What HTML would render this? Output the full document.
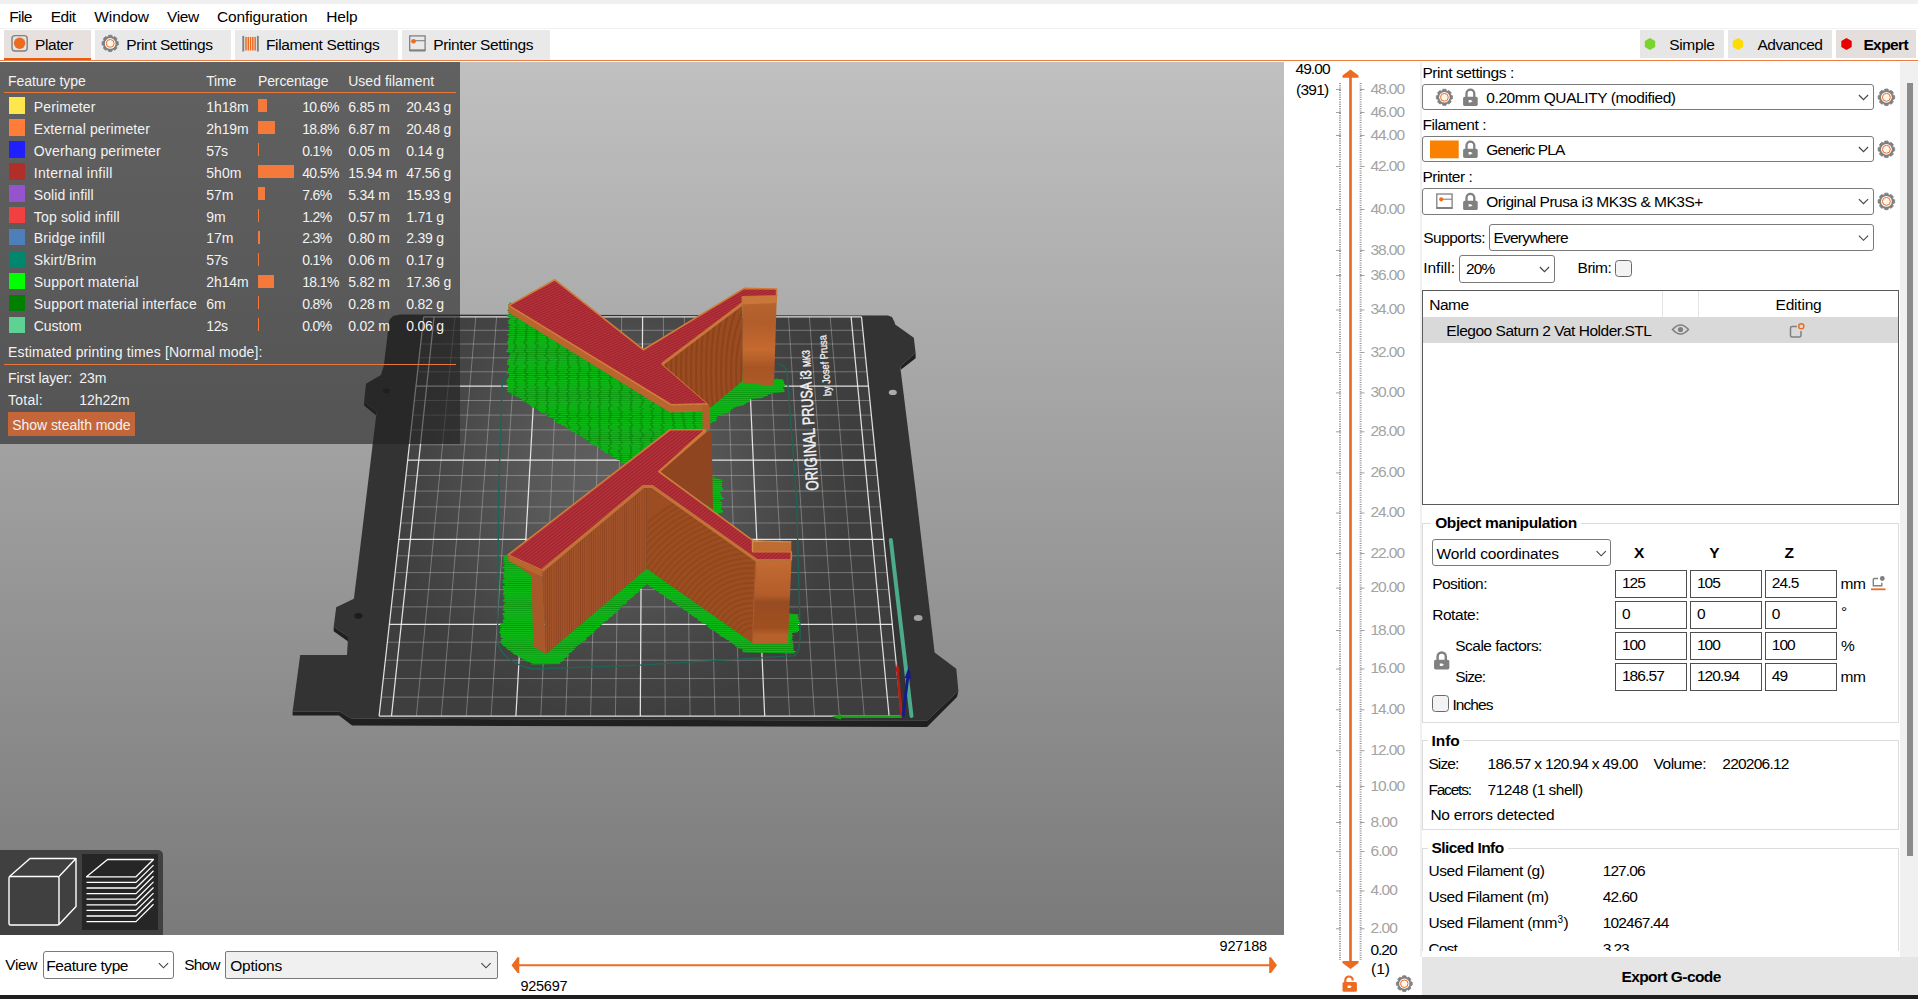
<!DOCTYPE html>
<html><head><meta charset="utf-8"><title>PrusaSlicer</title>
<style>
html,body{margin:0;padding:0;}
body{width:1918px;height:999px;position:relative;overflow:hidden;background:#fff;font-family:"Liberation Sans",sans-serif;}
.t{position:absolute;white-space:pre;}
.r{position:absolute;display:block;}
</style></head><body>
<svg class="r" style="left:0;top:62px" width="1284" height="873" viewBox="0 62 1284 873"><defs>
<linearGradient id="bg" x1="0" y1="0" x2="0" y2="1"><stop offset="0" stop-color="#c0c0c0"/><stop offset="1" stop-color="#7a7a7a"/></linearGradient>
<radialGradient id="glow" cx="615" cy="480" r="240" gradientUnits="userSpaceOnUse"><stop offset="0" stop-color="#616161"/><stop offset="0.35" stop-color="#585858"/><stop offset="0.76" stop-color="#464646"/><stop offset="1" stop-color="#3e3e3e"/></radialGradient>
<pattern id="pgreen" width="4" height="2.1" patternUnits="userSpaceOnUse"><rect width="4" height="2.1" fill="#0cbd15"/><rect y="1.3" width="4" height="0.8" fill="#079511"/></pattern>
<pattern id="pgreenv" width="10.5" height="2.1" patternUnits="userSpaceOnUse"><rect width="10.5" height="2.1" fill="#0cbd15"/><rect y="1.3" width="10.5" height="0.8" fill="#079511"/><rect x="0" width="2.2" height="2.1" fill="#05800c" opacity="0.6"/></pattern>
<pattern id="pred" width="2.3" height="6" patternUnits="userSpaceOnUse" patternTransform="rotate(66)"><rect width="2.3" height="6" fill="#b4323b"/><rect x="1.4" width="0.9" height="6" fill="#9c222b"/></pattern>
<pattern id="pred2" width="2.6" height="6" patternUnits="userSpaceOnUse" patternTransform="rotate(52)"><rect width="2.6" height="6" fill="#b4323b"/><rect x="1.6" width="1" height="6" fill="#9c222b"/></pattern>
<pattern id="pwallL" width="2.2" height="6" patternUnits="userSpaceOnUse"><rect width="2.2" height="6" fill="#a4542b"/><rect x="1.3" width="0.9" height="6" fill="#8f4520"/></pattern>
<linearGradient id="gend" x1="0" y1="0" x2="0" y2="1"><stop offset="0" stop-color="#c26c33"/><stop offset="0.42" stop-color="#b35c2a"/><stop offset="0.5" stop-color="#984c22"/><stop offset="0.82" stop-color="#a0501f"/><stop offset="0.9" stop-color="#b6602b"/><stop offset="1" stop-color="#b6602b"/></linearGradient>
<linearGradient id="gend2" x1="0" y1="0" x2="0" y2="1"><stop offset="0" stop-color="#b8662f"/><stop offset="0.3" stop-color="#b25d2a"/><stop offset="0.6" stop-color="#c56a30"/><stop offset="0.8" stop-color="#a85523"/><stop offset="1" stop-color="#b05a28"/></linearGradient>
<clipPath id="cwr"><polygon points="648,486.5 756.2,560 752.5,643 646.8,568.7"/></clipPath>
<clipPath id="cwu"><polygon points="662.2,364.1 742.4,303.8 742.4,381 710,408 708.2,404"/></clipPath>
<filter id="jag" x="-5%" y="-5%" width="110%" height="110%"><feTurbulence type="fractalNoise" baseFrequency="0.03 0.45" numOctaves="1" seed="7" result="n"/><feColorMatrix in="n" type="matrix" values="1 0 0 0 0  0 0 0 0 0.5  0 0 0 0 0  0 0 0 0 1" result="m"/><feDisplacementMap in="SourceGraphic" in2="m" scale="7" xChannelSelector="R" yChannelSelector="G"/></filter>
</defs>
<rect x="0" y="62" width="1284" height="873" fill="url(#bg)"/>
<polygon points="292.6,711.4 292.6,715.5 339.0,715.5 352.1,725.6 927.0,727.0 957.0,697.0 958.4,691.1 926.9,720.8 351.2,718.6 339.5,711.4" fill="#202020" />
<polygon points="333.7,626.7 333.7,631.2 348.1,641.6 348.1,636.6" fill="#202020" />
<polygon points="364.1,401.8 364.1,405.5 376.2,415.5 376.6,411.9" fill="#202020" />
<polygon points="915.6,352.8 915.6,358.2 900.8,369.8 900.2,366.5" fill="#202020" />
<polygon points="400.2,314.6 888.0,315.4 892.0,317.0 894.6,322.2 895.2,324.6 913.8,337.8 915.6,352.8 900.2,366.5 915.6,490.0 934.6,652.6 956.3,668.7 958.4,691.1 926.9,720.8 351.2,718.6 339.5,711.4 292.6,711.4 300.2,655.0 347.0,655.0 348.1,636.6 333.7,626.7 336.2,607.2 353.9,598.7 358.7,560.0 376.6,411.9 364.1,401.8 366.0,383.8 380.9,374.9 383.8,365.7 389.3,320.1 393.0,316.0" fill="#333333" />
<ellipse cx="892.8" cy="392.4" rx="4" ry="2.6" fill="#ababab"/>
<ellipse cx="918.2" cy="617.9" rx="4.4" ry="3" fill="#a2a2a2"/>
<ellipse cx="386.5" cy="391" rx="3.4" ry="2.4" fill="#1c1c1c"/>
<ellipse cx="358.4" cy="615.9" rx="4" ry="2.8" fill="#1c1c1c"/>
<polygon points="901.5,716.0 379.1,716.0 423.7,316.8 861.5,316.8" fill="url(#glow)" />
<g stroke="#d0d0d0" stroke-opacity="0.38" stroke-width="1"><line x1="899.6" y1="697.1" x2="381.2" y2="697.1"/><line x1="897.8" y1="678.5" x2="383.3" y2="678.5"/><line x1="895.9" y1="660.2" x2="385.3" y2="660.2"/><line x1="894.1" y1="642.2" x2="387.3" y2="642.2"/><line x1="890.6" y1="606.9" x2="391.3" y2="606.9"/><line x1="888.9" y1="589.6" x2="393.2" y2="589.6"/><line x1="887.2" y1="572.6" x2="395.1" y2="572.6"/><line x1="885.5" y1="555.8" x2="397.0" y2="555.8"/><line x1="882.2" y1="523.0" x2="400.7" y2="523.0"/><line x1="880.6" y1="506.9" x2="402.4" y2="506.9"/><line x1="879.0" y1="491.1" x2="404.2" y2="491.1"/><line x1="877.4" y1="475.5" x2="406.0" y2="475.5"/><line x1="874.3" y1="444.8" x2="409.4" y2="444.8"/><line x1="872.8" y1="429.9" x2="411.1" y2="429.9"/><line x1="871.3" y1="415.1" x2="412.7" y2="415.1"/><line x1="869.9" y1="400.5" x2="414.3" y2="400.5"/><line x1="867.0" y1="371.8" x2="417.5" y2="371.8"/><line x1="865.6" y1="357.8" x2="419.1" y2="357.8"/><line x1="864.2" y1="344.0" x2="420.6" y2="344.0"/><line x1="862.8" y1="330.3" x2="422.2" y2="330.3"/><line x1="864.2" y1="716.0" x2="830.2" y2="316.8"/><line x1="839.3" y1="716.0" x2="809.4" y2="316.8"/><line x1="814.5" y1="716.0" x2="788.5" y2="316.8"/><line x1="789.6" y1="716.0" x2="767.7" y2="316.8"/><line x1="739.8" y1="716.0" x2="726.0" y2="316.8"/><line x1="715.0" y1="716.0" x2="705.1" y2="316.8"/><line x1="690.1" y1="716.0" x2="684.3" y2="316.8"/><line x1="665.2" y1="716.0" x2="663.4" y2="316.8"/><line x1="615.4" y1="716.0" x2="621.7" y2="316.8"/><line x1="590.6" y1="716.0" x2="600.9" y2="316.8"/><line x1="565.7" y1="716.0" x2="580.0" y2="316.8"/><line x1="540.8" y1="716.0" x2="559.2" y2="316.8"/><line x1="491.1" y1="716.0" x2="517.5" y2="316.8"/><line x1="466.2" y1="716.0" x2="496.6" y2="316.8"/><line x1="441.3" y1="716.0" x2="475.8" y2="316.8"/><line x1="416.4" y1="716.0" x2="454.9" y2="316.8"/></g>
<g stroke="#f2f2f2" stroke-opacity="0.9" stroke-width="1.25"><line x1="901.5" y1="716.0" x2="379.1" y2="716.0"/><line x1="892.3" y1="624.4" x2="389.3" y2="624.4"/><line x1="883.8" y1="539.3" x2="398.8" y2="539.3"/><line x1="875.9" y1="460.0" x2="407.7" y2="460.0"/><line x1="868.4" y1="386.1" x2="415.9" y2="386.1"/><line x1="861.5" y1="316.8" x2="423.7" y2="316.8"/><line x1="889.1" y1="716.0" x2="851.1" y2="316.8"/><line x1="764.7" y1="716.0" x2="746.8" y2="316.8"/><line x1="640.3" y1="716.0" x2="642.6" y2="316.8"/><line x1="515.9" y1="716.0" x2="538.3" y2="316.8"/><line x1="391.5" y1="716.0" x2="434.1" y2="316.8"/><line x1="901.5" y1="716.0" x2="861.5" y2="316.8"/><line x1="379.1" y1="716.0" x2="423.7" y2="316.8"/></g>
<text transform="translate(818.4,490.3) rotate(-93.6) scale(0.752,1)" font-family="Liberation Sans, sans-serif" font-size="17.5" fill="#f2f2f2" stroke="#f2f2f2" stroke-width="0.45">ORIGINAL <tspan font-size="16.5">PRUSA </tspan><tspan font-size="15.5">i3 </tspan><tspan font-size="10.8">MK3</tspan></text>
<text transform="translate(831.2,395.8) rotate(-94.8) scale(0.84,1)" font-family="Liberation Sans, sans-serif" font-size="11" fill="#f2f2f2" stroke="#f2f2f2" stroke-width="0.3">by Josef Prusa</text>
<path d="M510.7 369.3 L502.3 380 L498.5 500 L497.5 643.8 Q505 663 532.3 669 L640 665.2 L793 655.8 Q800 655 800.2 634 L796.6 500 L787 372 Q786 366 779 364" fill="none" stroke="#1d6657" stroke-width="1.3"/>
<line x1="890.8" y1="540" x2="911.5" y2="716" stroke="#4cab8a" stroke-width="4" stroke-linecap="round"/>
<line x1="901.6" y1="716.6" x2="897.3" y2="668" stroke="#b02018" stroke-width="2.6"/><path d="M897.1 662 L895.3 672 L899.8 671.6 Z" fill="#b02018"/>
<line x1="903" y1="716.6" x2="908" y2="676" stroke="#141a90" stroke-width="2.8"/><path d="M908.6 667 L904.8 678 L911.4 678.6 Z" fill="#141a90"/>
<line x1="901.6" y1="716.8" x2="838" y2="716.8" stroke="#18a018" stroke-width="2.6"/><path d="M832 716.8 L841 714 L841 719.6 Z" fill="#18a018"/>
<g filter="url(#jag)">
<polygon points="508.5,302.0 671.0,402.0 708.0,402.0 708.0,434.0 672.0,434.0 629.0,467.0 508.0,391.5 506.5,383.0 508.0,379.0" fill="url(#pgreenv)" />
<polygon points="705.0,403.0 742.4,374.0 774.0,380.0 775.0,378.5 784.0,379.5 784.5,392.0 772.0,393.5 762.0,398.0 752.0,399.0 745.0,405.0 735.0,407.0 728.0,413.0 720.0,415.0 712.0,423.0 709.0,423.0" fill="url(#pgreen)" />
<polygon points="706.0,474.0 722.0,480.0 722.0,512.0 716.0,515.0 706.0,506.0" fill="url(#pgreen)" />
<polygon points="503.5,556.0 512.0,556.0 538.0,574.0 538.0,644.0 546.0,649.0 646.8,562.0 752.0,636.0 786.0,636.0 786.0,613.0 799.0,614.5 799.0,632.0 792.0,633.0 794.0,653.5 745.0,652.5 646.8,584.0 570.0,653.5 560.0,664.0 533.0,664.5 515.0,655.0 501.0,643.0 500.0,626.5 503.5,621.0" fill="url(#pgreen)" />
</g>
<polygon points="508.3,304.0 671.0,402.0 708.5,402.0 708.5,411.5 670.0,412.5 508.5,312.5" fill="#b8652f" />
<polygon points="702.5,405.5 710.2,405.5 710.2,429.5 702.5,429.5" fill="#b35f2b" />
<polygon points="508.9,305.6 554.9,279.8 643.3,349.7 744.2,288.4 776.6,289.0 776.6,296.0 742.4,296.8 742.4,303.8 662.2,364.1 708.2,403.8 671.2,404.7" fill="url(#pred)" stroke="#cf7c3a" stroke-width="1.6" stroke-linejoin="round"/>
<polygon points="662.2,364.1 742.4,303.8 742.4,381.0 710.0,408.0 708.2,404.0" fill="#9a4b20" />
<g clip-path="url(#cwu)" fill="none" stroke="#7f3a14" stroke-width="2" stroke-opacity="0.45"><ellipse cx="760" cy="372" rx="14" ry="36.4"/><ellipse cx="760" cy="372" rx="19" ry="49.4"/><ellipse cx="760" cy="372" rx="24" ry="62.4"/><ellipse cx="760" cy="372" rx="29" ry="75.4"/><ellipse cx="760" cy="372" rx="34" ry="88.4"/><ellipse cx="760" cy="372" rx="39" ry="101.4"/><ellipse cx="760" cy="372" rx="44" ry="114.4"/><ellipse cx="760" cy="372" rx="49" ry="127.4"/><ellipse cx="760" cy="372" rx="54" ry="140.4"/><ellipse cx="760" cy="372" rx="59" ry="153.4"/><ellipse cx="760" cy="372" rx="64" ry="166.4"/><ellipse cx="760" cy="372" rx="69" ry="179.4"/><ellipse cx="760" cy="372" rx="74" ry="192.4"/><ellipse cx="760" cy="372" rx="79" ry="205.4"/><ellipse cx="760" cy="372" rx="84" ry="218.4"/><ellipse cx="760" cy="372" rx="89" ry="231.4"/><ellipse cx="760" cy="372" rx="94" ry="244.4"/><ellipse cx="760" cy="372" rx="99" ry="257.4"/></g>
<polyline points="662.2,364.1 742.4,303.8" fill="none" stroke="#c8763a" stroke-width="3"/>
<polygon points="742.4,296.5 776.8,295.6 774.0,386.0 742.4,382.5" fill="url(#gend2)" />
<polygon points="742.4,296.5 776.8,295.6 776.8,303.0 742.4,304.5" fill="#c9773a" />
<polygon points="658.8,471.5 706.3,430.6 711.7,432.0 713.0,509.5" fill="#8f451f" />
<polyline points="658.8,471.5 706.3,430.6" fill="none" stroke="#c8763a" stroke-width="2.6"/>
<polygon points="508.0,555.1 670.2,429.7 705.4,429.7 658.8,471.5 752.6,540.3 752.6,551.8 791.3,551.8 791.3,560.0 756.2,560.0 652.2,486.5 643.2,486.5 542.3,570.4" fill="url(#pred2)" stroke="#cf7c3a" stroke-width="1.6" stroke-linejoin="round"/>
<polygon points="752.6,541.0 791.3,541.8 791.3,551.8 752.6,551.8" fill="#bf6c33" />
<polyline points="752.6,551.8 752.6,541 791.3,541.8" fill="none" stroke="#d58a45" stroke-width="1.3"/>
<polygon points="542.3,570.4 643.2,486.5 647.0,486.5 646.8,568.7 545.9,654.3" fill="url(#pwallL)" />
<polygon points="508.0,555.1 542.3,570.4 545.9,654.3 533.3,646.2 531.5,576.0 510.0,560.0" fill="#a8582a" />
<polygon points="508.0,555.1 542.3,570.4 542.6,577.0 508.5,561.0" fill="#b8652f" />
<polygon points="647.0,486.5 652.2,486.5 756.2,560.0 752.5,643.0 646.8,568.7" fill="#9c4d22" />
<g clip-path="url(#cwr)" fill="none" stroke="#85400f" stroke-width="2.2" stroke-opacity="0.4"><circle cx="752" cy="640" r="12"/><circle cx="752" cy="640" r="17"/><circle cx="752" cy="640" r="22"/><circle cx="752" cy="640" r="27"/><circle cx="752" cy="640" r="32"/><circle cx="752" cy="640" r="37"/><circle cx="752" cy="640" r="42"/><circle cx="752" cy="640" r="47"/><circle cx="752" cy="640" r="52"/><circle cx="752" cy="640" r="57"/><circle cx="752" cy="640" r="62"/><circle cx="752" cy="640" r="67"/><circle cx="752" cy="640" r="72"/><circle cx="752" cy="640" r="77"/><circle cx="752" cy="640" r="82"/><circle cx="752" cy="640" r="87"/><circle cx="752" cy="640" r="92"/><circle cx="752" cy="640" r="97"/><circle cx="752" cy="640" r="102"/><circle cx="752" cy="640" r="107"/><circle cx="752" cy="640" r="112"/><circle cx="752" cy="640" r="117"/><circle cx="752" cy="640" r="122"/><circle cx="752" cy="640" r="127"/><circle cx="752" cy="640" r="132"/><circle cx="752" cy="640" r="137"/><circle cx="752" cy="640" r="142"/><circle cx="752" cy="640" r="147"/><circle cx="752" cy="640" r="152"/><circle cx="752" cy="640" r="157"/></g>
<polyline points="542.3,570.4 643.2,486.5 652.2,486.5 756.2,560" fill="none" stroke="#c27238" stroke-width="3.2" stroke-linejoin="round"/>
<polygon points="756.0,560.5 791.5,560.5 788.0,643.2 752.5,643.2" fill="url(#gend)" />
<line x1="755.4" y1="561" x2="752.6" y2="643" stroke="#aa5a2a" stroke-width="1.2"/></svg>
<div class="r" style="left:0px;top:62px;width:460px;height:382px;background:rgba(33,33,33,0.6);"></div>
<span class="t" style="left:8.10px;top:73.65px;font-size:14px;line-height:14px;color:#f2f2f2;letter-spacing:-0.092px;">Feature type</span>
<span class="t" style="left:206.30px;top:73.65px;font-size:14px;line-height:14px;color:#f2f2f2;letter-spacing:-0.223px;">Time</span>
<span class="t" style="left:258.00px;top:73.65px;font-size:14px;line-height:14px;color:#f2f2f2;letter-spacing:-0.131px;">Percentage</span>
<span class="t" style="left:348.20px;top:73.65px;font-size:14px;line-height:14px;color:#f2f2f2;letter-spacing:0.031px;">Used filament</span>
<div class="r" style="left:4px;top:91.8px;width:452px;height:1.2px;background:#e8773a;"></div>
<div class="r" style="left:8.8px;top:97.4px;width:16.4px;height:16.4px;background:#ffe64d;"></div>
<span class="t" style="left:33.80px;top:99.85px;font-size:14px;line-height:14px;color:#f2f2f2;letter-spacing:0.113px;">Perimeter</span>
<span class="t" style="left:206.30px;top:99.85px;font-size:14px;line-height:14px;color:#f2f2f2;letter-spacing:-0.102px;">1h18m</span>
<div class="r" style="left:258px;top:99.1px;width:9.434px;height:13px;background:#f5793a;"></div>
<span class="t" style="left:302.20px;top:99.85px;font-size:14px;line-height:14px;color:#f2f2f2;letter-spacing:-0.639px;">10.6%</span>
<span class="t" style="left:348.20px;top:99.85px;font-size:14px;line-height:14px;color:#f2f2f2;letter-spacing:-0.233px;">6.85 m</span>
<span class="t" style="left:406.30px;top:99.85px;font-size:14px;line-height:14px;color:#f2f2f2;letter-spacing:-0.302px;">20.43 g</span>
<div class="r" style="left:8.8px;top:119.33px;width:16.4px;height:16.4px;background:#ff7d38;"></div>
<span class="t" style="left:33.80px;top:121.78px;font-size:14px;line-height:14px;color:#f2f2f2;letter-spacing:0.101px;">External perimeter</span>
<span class="t" style="left:206.30px;top:121.78px;font-size:14px;line-height:14px;color:#f2f2f2;letter-spacing:-0.102px;">2h19m</span>
<div class="r" style="left:258px;top:121.03px;width:16.732px;height:13px;background:#f5793a;"></div>
<span class="t" style="left:302.20px;top:121.78px;font-size:14px;line-height:14px;color:#f2f2f2;letter-spacing:-0.639px;">18.8%</span>
<span class="t" style="left:348.20px;top:121.78px;font-size:14px;line-height:14px;color:#f2f2f2;letter-spacing:-0.233px;">6.87 m</span>
<span class="t" style="left:406.30px;top:121.78px;font-size:14px;line-height:14px;color:#f2f2f2;letter-spacing:-0.302px;">20.48 g</span>
<div class="r" style="left:8.8px;top:141.26px;width:16.4px;height:16.4px;background:#1f1fff;"></div>
<span class="t" style="left:33.80px;top:143.71px;font-size:14px;line-height:14px;color:#f2f2f2;letter-spacing:0.138px;">Overhang perimeter</span>
<span class="t" style="left:206.30px;top:143.71px;font-size:14px;line-height:14px;color:#f2f2f2;letter-spacing:-0.458px;">57s</span>
<div class="r" style="left:258px;top:142.96px;width:1.2px;height:13px;background:#f5793a;"></div>
<span class="t" style="left:302.20px;top:143.71px;font-size:14px;line-height:14px;color:#f2f2f2;letter-spacing:-0.653px;">0.1%</span>
<span class="t" style="left:348.20px;top:143.71px;font-size:14px;line-height:14px;color:#f2f2f2;letter-spacing:-0.233px;">0.05 m</span>
<span class="t" style="left:406.30px;top:143.71px;font-size:14px;line-height:14px;color:#f2f2f2;letter-spacing:-0.254px;">0.14 g</span>
<div class="r" style="left:8.8px;top:163.19px;width:16.4px;height:16.4px;background:#b03029;"></div>
<span class="t" style="left:33.80px;top:165.64px;font-size:14px;line-height:14px;color:#f2f2f2;letter-spacing:0.273px;">Internal infill</span>
<span class="t" style="left:206.30px;top:165.64px;font-size:14px;line-height:14px;color:#f2f2f2;letter-spacing:0.020px;">5h0m</span>
<div class="r" style="left:258px;top:164.89px;width:36.045px;height:13px;background:#f5793a;"></div>
<span class="t" style="left:302.20px;top:165.64px;font-size:14px;line-height:14px;color:#f2f2f2;letter-spacing:-0.639px;">40.5%</span>
<span class="t" style="left:348.20px;top:165.64px;font-size:14px;line-height:14px;color:#f2f2f2;letter-spacing:-0.212px;">15.94 m</span>
<span class="t" style="left:406.30px;top:165.64px;font-size:14px;line-height:14px;color:#f2f2f2;letter-spacing:-0.302px;">47.56 g</span>
<div class="r" style="left:8.8px;top:185.12px;width:16.4px;height:16.4px;background:#9654cc;"></div>
<span class="t" style="left:33.80px;top:187.57px;font-size:14px;line-height:14px;color:#f2f2f2;letter-spacing:0.063px;">Solid infill</span>
<span class="t" style="left:206.30px;top:187.57px;font-size:14px;line-height:14px;color:#f2f2f2;letter-spacing:-0.078px;">57m</span>
<div class="r" style="left:258px;top:186.82px;width:6.764px;height:13px;background:#f5793a;"></div>
<span class="t" style="left:302.20px;top:187.57px;font-size:14px;line-height:14px;color:#f2f2f2;letter-spacing:-0.653px;">7.6%</span>
<span class="t" style="left:348.20px;top:187.57px;font-size:14px;line-height:14px;color:#f2f2f2;letter-spacing:-0.233px;">5.34 m</span>
<span class="t" style="left:406.30px;top:187.57px;font-size:14px;line-height:14px;color:#f2f2f2;letter-spacing:-0.302px;">15.93 g</span>
<div class="r" style="left:8.8px;top:207.05px;width:16.4px;height:16.4px;background:#f04040;"></div>
<span class="t" style="left:33.80px;top:209.50px;font-size:14px;line-height:14px;color:#f2f2f2;letter-spacing:0.171px;">Top solid infill</span>
<span class="t" style="left:206.30px;top:209.50px;font-size:14px;line-height:14px;color:#f2f2f2;letter-spacing:-0.025px;">9m</span>
<div class="r" style="left:258px;top:208.75px;width:1.2px;height:13px;background:#f5793a;"></div>
<span class="t" style="left:302.20px;top:209.50px;font-size:14px;line-height:14px;color:#f2f2f2;letter-spacing:-0.653px;">1.2%</span>
<span class="t" style="left:348.20px;top:209.50px;font-size:14px;line-height:14px;color:#f2f2f2;letter-spacing:-0.233px;">0.57 m</span>
<span class="t" style="left:406.30px;top:209.50px;font-size:14px;line-height:14px;color:#f2f2f2;letter-spacing:-0.254px;">1.71 g</span>
<div class="r" style="left:8.8px;top:228.98px;width:16.4px;height:16.4px;background:#4d80ba;"></div>
<span class="t" style="left:33.80px;top:231.43px;font-size:14px;line-height:14px;color:#f2f2f2;letter-spacing:0.209px;">Bridge infill</span>
<span class="t" style="left:206.30px;top:231.43px;font-size:14px;line-height:14px;color:#f2f2f2;letter-spacing:-0.078px;">17m</span>
<div class="r" style="left:258px;top:230.68px;width:2.047px;height:13px;background:#f5793a;"></div>
<span class="t" style="left:302.20px;top:231.43px;font-size:14px;line-height:14px;color:#f2f2f2;letter-spacing:-0.653px;">2.3%</span>
<span class="t" style="left:348.20px;top:231.43px;font-size:14px;line-height:14px;color:#f2f2f2;letter-spacing:-0.233px;">0.80 m</span>
<span class="t" style="left:406.30px;top:231.43px;font-size:14px;line-height:14px;color:#f2f2f2;letter-spacing:-0.254px;">2.39 g</span>
<div class="r" style="left:8.8px;top:250.91px;width:16.4px;height:16.4px;background:#00876e;"></div>
<span class="t" style="left:33.80px;top:253.36px;font-size:14px;line-height:14px;color:#f2f2f2;letter-spacing:0.194px;">Skirt/Brim</span>
<span class="t" style="left:206.30px;top:253.36px;font-size:14px;line-height:14px;color:#f2f2f2;letter-spacing:-0.458px;">57s</span>
<div class="r" style="left:258px;top:252.61px;width:1.2px;height:13px;background:#f5793a;"></div>
<span class="t" style="left:302.20px;top:253.36px;font-size:14px;line-height:14px;color:#f2f2f2;letter-spacing:-0.653px;">0.1%</span>
<span class="t" style="left:348.20px;top:253.36px;font-size:14px;line-height:14px;color:#f2f2f2;letter-spacing:-0.233px;">0.06 m</span>
<span class="t" style="left:406.30px;top:253.36px;font-size:14px;line-height:14px;color:#f2f2f2;letter-spacing:-0.254px;">0.17 g</span>
<div class="r" style="left:8.8px;top:272.84px;width:16.4px;height:16.4px;background:#00ff00;"></div>
<span class="t" style="left:33.80px;top:275.29px;font-size:14px;line-height:14px;color:#f2f2f2;letter-spacing:0.136px;">Support material</span>
<span class="t" style="left:206.30px;top:275.29px;font-size:14px;line-height:14px;color:#f2f2f2;letter-spacing:-0.102px;">2h14m</span>
<div class="r" style="left:258px;top:274.54px;width:16.109px;height:13px;background:#f5793a;"></div>
<span class="t" style="left:302.20px;top:275.29px;font-size:14px;line-height:14px;color:#f2f2f2;letter-spacing:-0.639px;">18.1%</span>
<span class="t" style="left:348.20px;top:275.29px;font-size:14px;line-height:14px;color:#f2f2f2;letter-spacing:-0.233px;">5.82 m</span>
<span class="t" style="left:406.30px;top:275.29px;font-size:14px;line-height:14px;color:#f2f2f2;letter-spacing:-0.302px;">17.36 g</span>
<div class="r" style="left:8.8px;top:294.77px;width:16.4px;height:16.4px;background:#008000;"></div>
<span class="t" style="left:33.80px;top:297.22px;font-size:14px;line-height:14px;color:#f2f2f2;letter-spacing:0.104px;">Support material interface</span>
<span class="t" style="left:206.30px;top:297.22px;font-size:14px;line-height:14px;color:#f2f2f2;letter-spacing:-0.025px;">6m</span>
<div class="r" style="left:258px;top:296.47px;width:1.2px;height:13px;background:#f5793a;"></div>
<span class="t" style="left:302.20px;top:297.22px;font-size:14px;line-height:14px;color:#f2f2f2;letter-spacing:-0.653px;">0.8%</span>
<span class="t" style="left:348.20px;top:297.22px;font-size:14px;line-height:14px;color:#f2f2f2;letter-spacing:-0.233px;">0.28 m</span>
<span class="t" style="left:406.30px;top:297.22px;font-size:14px;line-height:14px;color:#f2f2f2;letter-spacing:-0.254px;">0.82 g</span>
<div class="r" style="left:8.8px;top:316.7px;width:16.4px;height:16.4px;background:#5ed194;"></div>
<span class="t" style="left:33.80px;top:319.15px;font-size:14px;line-height:14px;color:#f2f2f2;letter-spacing:-0.089px;">Custom</span>
<span class="t" style="left:206.30px;top:319.15px;font-size:14px;line-height:14px;color:#f2f2f2;letter-spacing:-0.458px;">12s</span>
<div class="r" style="left:258px;top:318.4px;width:1.2px;height:13px;background:#f5793a;"></div>
<span class="t" style="left:302.20px;top:319.15px;font-size:14px;line-height:14px;color:#f2f2f2;letter-spacing:-0.653px;">0.0%</span>
<span class="t" style="left:348.20px;top:319.15px;font-size:14px;line-height:14px;color:#f2f2f2;letter-spacing:-0.233px;">0.02 m</span>
<span class="t" style="left:406.30px;top:319.15px;font-size:14px;line-height:14px;color:#f2f2f2;letter-spacing:-0.254px;">0.06 g</span>
<span class="t" style="left:8.10px;top:344.95px;font-size:14px;line-height:14px;color:#f2f2f2;letter-spacing:0.141px;">Estimated printing times [Normal mode]:</span>
<div class="r" style="left:4px;top:363.5px;width:452px;height:1.2px;background:#e8773a;"></div>
<span class="t" style="left:8.10px;top:371.05px;font-size:14px;line-height:14px;color:#f2f2f2;letter-spacing:-0.120px;">First layer:</span>
<span class="t" style="left:79.30px;top:371.05px;font-size:14px;line-height:14px;color:#f2f2f2;letter-spacing:-0.078px;">23m</span>
<span class="t" style="left:8.10px;top:393.05px;font-size:14px;line-height:14px;color:#f2f2f2;letter-spacing:0.206px;">Total:</span>
<span class="t" style="left:79.30px;top:393.05px;font-size:14px;line-height:14px;color:#f2f2f2;letter-spacing:-0.032px;">12h22m</span>
<div class="r" style="left:7.7px;top:412.2px;width:127.4px;height:23.8px;background:#c5663a;"></div>
<span class="t" style="left:12.20px;top:417.75px;font-size:14px;line-height:14px;color:#f2f2f2;letter-spacing:-0.039px;">Show stealth mode</span>
<div class="r" style="left:0px;top:849.5px;width:163px;height:85.5px;background:#404040;border-top-right-radius:5px;"></div>
<div class="r" style="left:82.4px;top:854px;width:75.4px;height:75.5px;background:#262626;"></div>
<svg class="r" style="left:0px;top:849px" width="165" height="86" viewBox="0 849 165 86"><g fill="none" stroke="#fff" stroke-width="1.4" stroke-linejoin="round"><rect x="9" y="876.5" width="50" height="48.5" rx="1.5"/><path d="M9.5 876.5 L30 858.5 H76 L59 876.5 M76 858.5 V906.5 L59 924.5"/></g><g fill="none" stroke="#fff" stroke-width="1.3" stroke-linejoin="round"><path d="M86.5 876.8 L107.5 859.5 H153.5 L136 876.8 Z"/><path d="M86.5 882.4 H136 L153.5 865.1"/><path d="M86.5 888.0 H136 L153.5 870.7"/><path d="M86.5 893.6 H136 L153.5 876.3"/><path d="M86.5 899.2 H136 L153.5 881.9"/><path d="M86.5 904.8 H136 L153.5 887.5"/><path d="M86.5 910.4 H136 L153.5 893.1"/><path d="M86.5 916.0 H136 L153.5 898.7"/><path d="M86.5 921.6 H136 L153.5 904.3"/></g></svg>
<div class="r" style="left:0px;top:0px;width:1918px;height:4px;background:#f0f0f0;"></div>
<div class="r" style="left:0px;top:4px;width:1918px;height:24px;background:#fff;"></div>
<div class="r" style="left:0px;top:28px;width:1918px;height:33px;background:#fff;"></div>
<div class="r" style="left:0px;top:28px;width:1918px;height:1.2px;background:#f2f2f2;"></div>
<span class="t" style="left:9.30px;top:8.88px;font-size:15.5px;line-height:15.5px;color:#000;letter-spacing:-0.644px;">File</span>
<span class="t" style="left:50.70px;top:8.88px;font-size:15.5px;line-height:15.5px;color:#000;letter-spacing:-0.427px;">Edit</span>
<span class="t" style="left:94.30px;top:8.88px;font-size:15.5px;line-height:15.5px;color:#000;letter-spacing:-0.072px;">Window</span>
<span class="t" style="left:167.00px;top:8.88px;font-size:15.5px;line-height:15.5px;color:#000;letter-spacing:-0.404px;">View</span>
<span class="t" style="left:217.00px;top:8.88px;font-size:15.5px;line-height:15.5px;color:#000;letter-spacing:-0.131px;">Configuration</span>
<span class="t" style="left:326.30px;top:8.88px;font-size:15.5px;line-height:15.5px;color:#000;letter-spacing:-0.170px;">Help</span>
<div class="r" style="left:4px;top:30px;width:87px;height:30px;background:#e9e9e9;"></div>
<div class="r" style="left:95px;top:30px;width:135.5px;height:30px;background:#e9e9e9;"></div>
<div class="r" style="left:235px;top:30px;width:162.5px;height:30px;background:#e9e9e9;"></div>
<div class="r" style="left:402px;top:30px;width:148px;height:30px;background:#e9e9e9;"></div>
<div class="r" style="left:4px;top:30px;width:87px;height:30px;background:#e6e1df;"></div>
<div class="r" style="left:4px;top:57.5px;width:87px;height:3.7px;background:#ea5b0c;"></div>
<div class="r" style="left:0px;top:60px;width:1918px;height:1.1px;background:#ec7e45;"></div>
<span class="t" style="left:35.00px;top:36.88px;font-size:15.5px;line-height:15.5px;color:#000;letter-spacing:-0.415px;">Plater</span>
<span class="t" style="left:126.30px;top:36.88px;font-size:15.5px;line-height:15.5px;color:#000;letter-spacing:-0.428px;">Print Settings</span>
<span class="t" style="left:266.00px;top:36.88px;font-size:15.5px;line-height:15.5px;color:#000;letter-spacing:-0.368px;">Filament Settings</span>
<span class="t" style="left:433.30px;top:36.88px;font-size:15.5px;line-height:15.5px;color:#000;letter-spacing:-0.392px;">Printer Settings</span>
<svg class="r" style="left:0px;top:28px" width="560" height="34" viewBox="0 28 560 34"><rect x="12" y="35.6" width="15.2" height="15.4" rx="3" fill="none" stroke="#808080" stroke-width="1.4"/><circle cx="19.6" cy="43.3" r="5.7" fill="#ed6b21"/><polygon points="108.14,36.74 108.63,35.25 111.77,35.25 112.26,36.74 113.45,37.23 114.85,36.53 117.07,38.75 116.37,40.15 116.86,41.34 118.35,41.83 118.35,44.97 116.86,45.46 116.37,46.65 117.07,48.05 114.85,50.27 113.45,49.57 112.26,50.06 111.77,51.55 108.63,51.55 108.14,50.06 106.95,49.57 105.55,50.27 103.33,48.05 104.03,46.65 103.54,45.46 102.05,44.97 102.05,41.83 103.54,41.34 104.03,40.15 103.33,38.75 105.55,36.53 106.95,37.23" fill="#808080" stroke="#808080" stroke-width="0.8" stroke-linejoin="round"/><circle cx="110.2" cy="43.4" r="5.312" fill="#fff"/><circle cx="110.2" cy="43.4" r="3.901" fill="#fff6ee" stroke="#ed6b21" stroke-width="1"/><rect x="242.3" y="35.9" width="1.9" height="15.6" fill="#808080"/><rect x="245.2" y="36.9" width="1.5" height="13.6" fill="#ed6b21"/><rect x="247.5" y="36.9" width="1.5" height="13.6" fill="#ed6b21"/><rect x="249.8" y="36.9" width="1.5" height="13.6" fill="#ed6b21"/><rect x="252.1" y="36.9" width="1.5" height="13.6" fill="#ed6b21"/><rect x="254.4" y="36.9" width="1.5" height="13.6" fill="#ed6b21"/><rect x="256.9" y="35.9" width="1.9" height="15.6" fill="#808080"/><rect x="409.7" y="35.9" width="15.4" height="14.6" fill="none" stroke="#808080" stroke-width="1.3"/><line x1="409.7" y1="50.4" x2="425.1" y2="50.4" stroke="#808080" stroke-width="2"/><line x1="413" y1="40.7" x2="425" y2="40.7" stroke="#808080" stroke-width="1.1"/><circle cx="413.5" cy="41.2" r="2.3" fill="#ed6b21"/></svg>
<div class="r" style="left:1640px;top:30px;width:84px;height:28px;background:#e6e6e6;"></div>
<div class="r" style="left:1728px;top:30px;width:104px;height:28px;background:#e6e6e6;"></div>
<div class="r" style="left:1836px;top:30px;width:80px;height:28px;background:#e6e6e6;"></div>
<div class="r" style="left:1836px;top:30px;width:80px;height:28px;background:#e4dfdd;"></div>
<svg class="r" style="left:1640px;top:30px" width="280" height="28" viewBox="1640 30 280 28"><polygon points="1655.20,47.00 1650.00,50.00 1644.80,47.00 1644.80,41.00 1650.00,38.00 1655.20,41.00" fill="#7bd32e"/><polygon points="1743.20,47.00 1738.00,50.00 1732.80,47.00 1732.80,41.00 1738.00,38.00 1743.20,41.00" fill="#ffdc00"/><polygon points="1851.70,47.00 1846.50,50.00 1841.30,47.00 1841.30,41.00 1846.50,38.00 1851.70,41.00" fill="#e70000"/></svg>
<span class="t" style="left:1669.20px;top:36.88px;font-size:15.5px;line-height:15.5px;color:#000;letter-spacing:-0.330px;">Simple</span>
<span class="t" style="left:1757.40px;top:36.88px;font-size:15.5px;line-height:15.5px;color:#000;letter-spacing:-0.480px;">Advanced</span>
<span class="t" style="left:1863.40px;top:36.88px;font-size:15.5px;line-height:15.5px;color:#000;letter-spacing:-0.607px;font-weight:bold;">Expert</span>
<div class="r" style="left:0px;top:935px;width:1421px;height:60px;background:#fff;"></div>
<div class="r" style="left:0px;top:994.5px;width:1918px;height:5px;background:#1e1e1e;"></div>
<span class="t" style="left:5.30px;top:957.38px;font-size:15.5px;line-height:15.5px;color:#000;letter-spacing:-0.404px;">View</span>
<div class="r" style="left:42.5px;top:951px;width:131px;height:27.5px;background:#fff;border:1px solid #7a7a7a;box-sizing:border-box;border-radius:3px;"></div>
<span class="t" style="left:46.30px;top:957.88px;font-size:15.5px;line-height:15.5px;color:#000;letter-spacing:-0.444px;">Feature type</span>
<span class="t" style="left:184.20px;top:957.38px;font-size:15.5px;line-height:15.5px;color:#000;letter-spacing:-0.844px;">Show</span>
<div class="r" style="left:225px;top:951px;width:273px;height:27.5px;background:#f0f0f0;border:1px solid #7a7a7a;box-sizing:border-box;border-radius:2px;"></div>
<span class="t" style="left:230.20px;top:957.88px;font-size:15.5px;line-height:15.5px;color:#000;letter-spacing:-0.231px;">Options</span>
<svg class="r" style="left:150px;top:955px" width="350" height="20" viewBox="150 955 350 20"><path d="M158.90 963.20 l4.60 4.60 l4.60 -4.60" fill="none" stroke="#444" stroke-width="1.15"/><path d="M481.40 963.20 l4.60 4.60 l4.60 -4.60" fill="none" stroke="#444" stroke-width="1.15"/></svg>
<svg class="r" style="left:505px;top:950px" width="780" height="30" viewBox="505 950 780 30"><line x1="516" y1="965.2" x2="1270" y2="965.2" stroke="#ed6b21" stroke-width="2"/><path d="M511.5 965.2 L517.5 957.3 H519.3 V973.1 H517.5 Z" fill="#ed6b21"/><path d="M1277 965.2 L1271 957.3 H1269.2 V973.1 H1271 Z" fill="#ed6b21"/></svg>
<span class="t" style="left:520.50px;top:978.53px;font-size:14.5px;line-height:14.5px;color:#000;letter-spacing:-0.281px;">925697</span>
<span class="t" style="left:1219.50px;top:938.53px;font-size:14.5px;line-height:14.5px;color:#000;letter-spacing:-0.148px;">927188</span>
<div class="r" style="left:1284px;top:62px;width:137px;height:873px;background:#fff;"></div>
<svg class="r" style="left:1284px;top:62px" width="137" height="933" viewBox="1284 62 137 933"><line x1="1350.5" y1="76" x2="1350.5" y2="962" stroke="#ed6b21" stroke-width="2.7"/><path d="M1350.5 69.5 L1358.5 75.5 V77.8 H1342.5 V75.5 Z" fill="#ed6b21"/><path d="M1350.5 969 L1358.5 963 V961 H1342.5 V963 Z" fill="#ed6b21"/><line x1="1340" y1="83" x2="1340" y2="960" stroke="#959595" stroke-width="2" stroke-dasharray="1 1.3"/><line x1="1360.6" y1="83" x2="1360.6" y2="960" stroke="#959595" stroke-width="2" stroke-dasharray="1 1.3"/><line x1="1336" y1="89.5" x2="1341" y2="89.5" stroke="#a0a0a0" stroke-width="1"/><line x1="1360" y1="89.5" x2="1364.5" y2="89.5" stroke="#a0a0a0" stroke-width="1"/><line x1="1336" y1="112.5" x2="1341" y2="112.5" stroke="#a0a0a0" stroke-width="1"/><line x1="1360" y1="112.5" x2="1364.5" y2="112.5" stroke="#a0a0a0" stroke-width="1"/><line x1="1336" y1="135.5" x2="1341" y2="135.5" stroke="#a0a0a0" stroke-width="1"/><line x1="1360" y1="135.5" x2="1364.5" y2="135.5" stroke="#a0a0a0" stroke-width="1"/><line x1="1336" y1="166.5" x2="1341" y2="166.5" stroke="#a0a0a0" stroke-width="1"/><line x1="1360" y1="166.5" x2="1364.5" y2="166.5" stroke="#a0a0a0" stroke-width="1"/><line x1="1336" y1="209.5" x2="1341" y2="209.5" stroke="#a0a0a0" stroke-width="1"/><line x1="1360" y1="209.5" x2="1364.5" y2="209.5" stroke="#a0a0a0" stroke-width="1"/><line x1="1336" y1="250.5" x2="1341" y2="250.5" stroke="#a0a0a0" stroke-width="1"/><line x1="1360" y1="250.5" x2="1364.5" y2="250.5" stroke="#a0a0a0" stroke-width="1"/><line x1="1336" y1="275.5" x2="1341" y2="275.5" stroke="#a0a0a0" stroke-width="1"/><line x1="1360" y1="275.5" x2="1364.5" y2="275.5" stroke="#a0a0a0" stroke-width="1"/><line x1="1336" y1="310" x2="1341" y2="310" stroke="#a0a0a0" stroke-width="1"/><line x1="1360" y1="310" x2="1364.5" y2="310" stroke="#a0a0a0" stroke-width="1"/><line x1="1336" y1="352.5" x2="1341" y2="352.5" stroke="#a0a0a0" stroke-width="1"/><line x1="1360" y1="352.5" x2="1364.5" y2="352.5" stroke="#a0a0a0" stroke-width="1"/><line x1="1336" y1="392.9" x2="1341" y2="392.9" stroke="#a0a0a0" stroke-width="1"/><line x1="1360" y1="392.9" x2="1364.5" y2="392.9" stroke="#a0a0a0" stroke-width="1"/><line x1="1336" y1="431.8" x2="1341" y2="431.8" stroke="#a0a0a0" stroke-width="1"/><line x1="1360" y1="431.8" x2="1364.5" y2="431.8" stroke="#a0a0a0" stroke-width="1"/><line x1="1336" y1="472.9" x2="1341" y2="472.9" stroke="#a0a0a0" stroke-width="1"/><line x1="1360" y1="472.9" x2="1364.5" y2="472.9" stroke="#a0a0a0" stroke-width="1"/><line x1="1336" y1="513" x2="1341" y2="513" stroke="#a0a0a0" stroke-width="1"/><line x1="1360" y1="513" x2="1364.5" y2="513" stroke="#a0a0a0" stroke-width="1"/><line x1="1336" y1="553.5" x2="1341" y2="553.5" stroke="#a0a0a0" stroke-width="1"/><line x1="1360" y1="553.5" x2="1364.5" y2="553.5" stroke="#a0a0a0" stroke-width="1"/><line x1="1336" y1="588.1" x2="1341" y2="588.1" stroke="#a0a0a0" stroke-width="1"/><line x1="1360" y1="588.1" x2="1364.5" y2="588.1" stroke="#a0a0a0" stroke-width="1"/><line x1="1336" y1="630.5" x2="1341" y2="630.5" stroke="#a0a0a0" stroke-width="1"/><line x1="1360" y1="630.5" x2="1364.5" y2="630.5" stroke="#a0a0a0" stroke-width="1"/><line x1="1336" y1="669" x2="1341" y2="669" stroke="#a0a0a0" stroke-width="1"/><line x1="1360" y1="669" x2="1364.5" y2="669" stroke="#a0a0a0" stroke-width="1"/><line x1="1336" y1="709.8" x2="1341" y2="709.8" stroke="#a0a0a0" stroke-width="1"/><line x1="1360" y1="709.8" x2="1364.5" y2="709.8" stroke="#a0a0a0" stroke-width="1"/><line x1="1336" y1="750.7" x2="1341" y2="750.7" stroke="#a0a0a0" stroke-width="1"/><line x1="1360" y1="750.7" x2="1364.5" y2="750.7" stroke="#a0a0a0" stroke-width="1"/><line x1="1336" y1="786.5" x2="1341" y2="786.5" stroke="#a0a0a0" stroke-width="1"/><line x1="1360" y1="786.5" x2="1364.5" y2="786.5" stroke="#a0a0a0" stroke-width="1"/><line x1="1336" y1="822.5" x2="1341" y2="822.5" stroke="#a0a0a0" stroke-width="1"/><line x1="1360" y1="822.5" x2="1364.5" y2="822.5" stroke="#a0a0a0" stroke-width="1"/><line x1="1336" y1="851.5" x2="1341" y2="851.5" stroke="#a0a0a0" stroke-width="1"/><line x1="1360" y1="851.5" x2="1364.5" y2="851.5" stroke="#a0a0a0" stroke-width="1"/><line x1="1336" y1="891" x2="1341" y2="891" stroke="#a0a0a0" stroke-width="1"/><line x1="1360" y1="891" x2="1364.5" y2="891" stroke="#a0a0a0" stroke-width="1"/><line x1="1336" y1="928.8" x2="1341" y2="928.8" stroke="#a0a0a0" stroke-width="1"/><line x1="1360" y1="928.8" x2="1364.5" y2="928.8" stroke="#a0a0a0" stroke-width="1"/><rect x="1342.5" y="982" width="14.4" height="9.8" rx="1.6" fill="#ed6b21"/><path d="M1345.3 982.5 v-2.3 a3.7 3.7 0 0 1 7.4 0 v0.3" fill="none" stroke="#ed6b21" stroke-width="2.2"/><path d="M1347.6 985.6 h2.4 l1.8 1.2 l-1.8 1.2 h-2.4 z" fill="#fff"/><polygon points="1402.31,977.28 1402.79,975.84 1405.81,975.84 1406.29,977.28 1407.44,977.76 1408.79,977.08 1410.92,979.21 1410.24,980.56 1410.72,981.71 1412.16,982.19 1412.16,985.21 1410.72,985.69 1410.24,986.84 1410.92,988.19 1408.79,990.32 1407.44,989.64 1406.29,990.12 1405.81,991.56 1402.79,991.56 1402.31,990.12 1401.16,989.64 1399.81,990.32 1397.68,988.19 1398.36,986.84 1397.88,985.69 1396.44,985.21 1396.44,982.19 1397.88,981.71 1398.36,980.56 1397.68,979.21 1399.81,977.08 1401.16,977.76" fill="#808080" stroke="#808080" stroke-width="0.8" stroke-linejoin="round"/><circle cx="1404.3" cy="983.7" r="5.12" fill="#fff"/><circle cx="1404.3" cy="983.7" r="3.76" fill="#fff6ee" stroke="#ed6b21" stroke-width="1"/></svg>
<span class="t" style="left:1370.50px;top:80.58px;font-size:15.5px;line-height:15.5px;color:#a3a3a3;letter-spacing:-1.058px;">48.00</span>
<span class="t" style="left:1370.50px;top:103.58px;font-size:15.5px;line-height:15.5px;color:#a3a3a3;letter-spacing:-1.058px;">46.00</span>
<span class="t" style="left:1370.50px;top:126.58px;font-size:15.5px;line-height:15.5px;color:#a3a3a3;letter-spacing:-1.058px;">44.00</span>
<span class="t" style="left:1370.50px;top:157.58px;font-size:15.5px;line-height:15.5px;color:#a3a3a3;letter-spacing:-1.058px;">42.00</span>
<span class="t" style="left:1370.50px;top:200.58px;font-size:15.5px;line-height:15.5px;color:#a3a3a3;letter-spacing:-1.058px;">40.00</span>
<span class="t" style="left:1370.50px;top:241.58px;font-size:15.5px;line-height:15.5px;color:#a3a3a3;letter-spacing:-1.058px;">38.00</span>
<span class="t" style="left:1370.50px;top:266.58px;font-size:15.5px;line-height:15.5px;color:#a3a3a3;letter-spacing:-1.058px;">36.00</span>
<span class="t" style="left:1370.50px;top:301.08px;font-size:15.5px;line-height:15.5px;color:#a3a3a3;letter-spacing:-1.058px;">34.00</span>
<span class="t" style="left:1370.50px;top:343.58px;font-size:15.5px;line-height:15.5px;color:#a3a3a3;letter-spacing:-1.058px;">32.00</span>
<span class="t" style="left:1370.50px;top:383.98px;font-size:15.5px;line-height:15.5px;color:#a3a3a3;letter-spacing:-1.058px;">30.00</span>
<span class="t" style="left:1370.50px;top:422.88px;font-size:15.5px;line-height:15.5px;color:#a3a3a3;letter-spacing:-1.058px;">28.00</span>
<span class="t" style="left:1370.50px;top:463.98px;font-size:15.5px;line-height:15.5px;color:#a3a3a3;letter-spacing:-1.058px;">26.00</span>
<span class="t" style="left:1370.50px;top:504.08px;font-size:15.5px;line-height:15.5px;color:#a3a3a3;letter-spacing:-1.058px;">24.00</span>
<span class="t" style="left:1370.50px;top:544.58px;font-size:15.5px;line-height:15.5px;color:#a3a3a3;letter-spacing:-1.058px;">22.00</span>
<span class="t" style="left:1370.50px;top:579.18px;font-size:15.5px;line-height:15.5px;color:#a3a3a3;letter-spacing:-1.058px;">20.00</span>
<span class="t" style="left:1370.50px;top:621.58px;font-size:15.5px;line-height:15.5px;color:#a3a3a3;letter-spacing:-1.058px;">18.00</span>
<span class="t" style="left:1370.50px;top:660.08px;font-size:15.5px;line-height:15.5px;color:#a3a3a3;letter-spacing:-1.058px;">16.00</span>
<span class="t" style="left:1370.50px;top:700.88px;font-size:15.5px;line-height:15.5px;color:#a3a3a3;letter-spacing:-1.058px;">14.00</span>
<span class="t" style="left:1370.50px;top:741.78px;font-size:15.5px;line-height:15.5px;color:#a3a3a3;letter-spacing:-1.058px;">12.00</span>
<span class="t" style="left:1370.50px;top:777.58px;font-size:15.5px;line-height:15.5px;color:#a3a3a3;letter-spacing:-1.058px;">10.00</span>
<span class="t" style="left:1370.50px;top:813.58px;font-size:15.5px;line-height:15.5px;color:#a3a3a3;letter-spacing:-0.942px;">8.00</span>
<span class="t" style="left:1370.50px;top:842.58px;font-size:15.5px;line-height:15.5px;color:#a3a3a3;letter-spacing:-0.942px;">6.00</span>
<span class="t" style="left:1370.50px;top:882.08px;font-size:15.5px;line-height:15.5px;color:#a3a3a3;letter-spacing:-0.942px;">4.00</span>
<span class="t" style="left:1370.50px;top:919.88px;font-size:15.5px;line-height:15.5px;color:#a3a3a3;letter-spacing:-0.942px;">2.00</span>
<span class="t" style="left:1295.50px;top:61.48px;font-size:15.5px;line-height:15.5px;color:#000;letter-spacing:-0.938px;">49.00</span>
<span class="t" style="left:1296.00px;top:81.68px;font-size:15.5px;line-height:15.5px;color:#000;letter-spacing:-0.757px;">(391)</span>
<span class="t" style="left:1370.50px;top:941.68px;font-size:15.5px;line-height:15.5px;color:#000;letter-spacing:-1.042px;">0.20</span>
<span class="t" style="left:1371.00px;top:960.78px;font-size:15.5px;line-height:15.5px;color:#000;letter-spacing:0.018px;">(1)</span>
<div class="r" style="left:1421px;top:62px;width:497px;height:895px;background:#fff;"></div>
<div class="r" style="left:1420px;top:62px;width:1.5px;height:895px;background:#f0f0f0;"></div>
<div class="r" style="left:1900px;top:62px;width:18px;height:895px;background:#f0f0f0;"></div>
<div class="r" style="left:1907px;top:83px;width:6px;height:773px;background:#8b8b8b;"></div>
<span class="t" style="left:1422.40px;top:64.88px;font-size:15.5px;line-height:15.5px;color:#000;letter-spacing:-0.426px;">Print settings :</span>
<span class="t" style="left:1422.40px;top:117.08px;font-size:15.5px;line-height:15.5px;color:#000;letter-spacing:-0.445px;">Filament :</span>
<span class="t" style="left:1422.40px;top:168.78px;font-size:15.5px;line-height:15.5px;color:#000;letter-spacing:-0.496px;">Printer :</span>
<div class="r" style="left:1422px;top:84.3px;width:452px;height:26.2px;background:#fff;border:1px solid #7a7a7a;box-sizing:border-box;border-radius:3px;"></div>
<div class="r" style="left:1422px;top:136.3px;width:452px;height:26.2px;background:#fff;border:1px solid #7a7a7a;box-sizing:border-box;border-radius:3px;"></div>
<div class="r" style="left:1422px;top:188.4px;width:452px;height:26.2px;background:#fff;border:1px solid #7a7a7a;box-sizing:border-box;border-radius:3px;"></div>
<span class="t" style="left:1486.30px;top:89.78px;font-size:15.5px;line-height:15.5px;color:#000;letter-spacing:-0.410px;">0.20mm QUALITY (modified)</span>
<span class="t" style="left:1486.30px;top:141.78px;font-size:15.5px;line-height:15.5px;color:#000;letter-spacing:-0.889px;">Generic PLA</span>
<span class="t" style="left:1486.30px;top:193.88px;font-size:15.5px;line-height:15.5px;color:#000;letter-spacing:-0.490px;">Original Prusa i3 MK3S &amp; MK3S+</span>
<svg class="r" style="left:1421px;top:62px" width="497" height="240" viewBox="1421 62 497 240"><polygon points="1442.36,90.72 1442.85,89.25 1445.95,89.25 1446.44,90.72 1447.61,91.21 1449.00,90.51 1451.19,92.70 1450.49,94.09 1450.98,95.26 1452.45,95.75 1452.45,98.85 1450.98,99.34 1450.49,100.51 1451.19,101.90 1449.00,104.09 1447.61,103.39 1446.44,103.88 1445.95,105.35 1442.85,105.35 1442.36,103.88 1441.19,103.39 1439.80,104.09 1437.61,101.90 1438.31,100.51 1437.82,99.34 1436.35,98.85 1436.35,95.75 1437.82,95.26 1438.31,94.09 1437.61,92.70 1439.80,90.51 1441.19,91.21" fill="#808080" stroke="#808080" stroke-width="0.8" stroke-linejoin="round"/><circle cx="1444.4" cy="97.3" r="5.248" fill="#fff"/><circle cx="1444.4" cy="97.3" r="3.854" fill="#fff6ee" stroke="#ed6b21" stroke-width="1"/><path d="M1466.50 97.20 v-3.60 a3.90 3.90 0 0 1 7.80 0 v3.60" fill="none" stroke="#808080" stroke-width="2.30"/><rect x="1463.10" y="96.70" width="14.60" height="9.20" rx="1.60" fill="#808080"/><path d="M1468.60 100.10 h2.20 l1.80 1.20 l-1.80 1.20 h-2.20 z" fill="#fff"/><path d="M1858.90 95.00 l4.60 4.60 l4.60 -4.60" fill="none" stroke="#444" stroke-width="1.15"/><polygon points="1884.31,90.56 1884.81,89.05 1887.99,89.05 1888.49,90.56 1889.69,91.06 1891.11,90.35 1893.35,92.59 1892.64,94.01 1893.14,95.21 1894.65,95.71 1894.65,98.89 1893.14,99.39 1892.64,100.59 1893.35,102.01 1891.11,104.25 1889.69,103.54 1888.49,104.04 1887.99,105.55 1884.81,105.55 1884.31,104.04 1883.11,103.54 1881.69,104.25 1879.45,102.01 1880.16,100.59 1879.66,99.39 1878.15,98.89 1878.15,95.71 1879.66,95.21 1880.16,94.01 1879.45,92.59 1881.69,90.35 1883.11,91.06" fill="#808080" stroke="#808080" stroke-width="0.8" stroke-linejoin="round"/><circle cx="1886.4" cy="97.3" r="5.376" fill="#fff"/><circle cx="1886.4" cy="97.3" r="3.948" fill="#fff6ee" stroke="#ed6b21" stroke-width="1"/><path d="M1466.50 149.20 v-3.60 a3.90 3.90 0 0 1 7.80 0 v3.60" fill="none" stroke="#808080" stroke-width="2.30"/><rect x="1463.10" y="148.70" width="14.60" height="9.20" rx="1.60" fill="#808080"/><path d="M1468.60 152.10 h2.20 l1.80 1.20 l-1.80 1.20 h-2.20 z" fill="#fff"/><path d="M1858.90 147.00 l4.60 4.60 l4.60 -4.60" fill="none" stroke="#444" stroke-width="1.15"/><polygon points="1884.31,142.56 1884.81,141.05 1887.99,141.05 1888.49,142.56 1889.69,143.06 1891.11,142.35 1893.35,144.59 1892.64,146.01 1893.14,147.21 1894.65,147.71 1894.65,150.89 1893.14,151.39 1892.64,152.59 1893.35,154.01 1891.11,156.25 1889.69,155.54 1888.49,156.04 1887.99,157.55 1884.81,157.55 1884.31,156.04 1883.11,155.54 1881.69,156.25 1879.45,154.01 1880.16,152.59 1879.66,151.39 1878.15,150.89 1878.15,147.71 1879.66,147.21 1880.16,146.01 1879.45,144.59 1881.69,142.35 1883.11,143.06" fill="#808080" stroke="#808080" stroke-width="0.8" stroke-linejoin="round"/><circle cx="1886.4" cy="149.3" r="5.376" fill="#fff"/><circle cx="1886.4" cy="149.3" r="3.948" fill="#fff6ee" stroke="#ed6b21" stroke-width="1"/><path d="M1466.50 201.30 v-3.60 a3.90 3.90 0 0 1 7.80 0 v3.60" fill="none" stroke="#808080" stroke-width="2.30"/><rect x="1463.10" y="200.80" width="14.60" height="9.20" rx="1.60" fill="#808080"/><path d="M1468.60 204.20 h2.20 l1.80 1.20 l-1.80 1.20 h-2.20 z" fill="#fff"/><path d="M1858.90 199.10 l4.60 4.60 l4.60 -4.60" fill="none" stroke="#444" stroke-width="1.15"/><polygon points="1884.31,194.66 1884.81,193.15 1887.99,193.15 1888.49,194.66 1889.69,195.16 1891.11,194.45 1893.35,196.69 1892.64,198.11 1893.14,199.31 1894.65,199.81 1894.65,202.99 1893.14,203.49 1892.64,204.69 1893.35,206.11 1891.11,208.35 1889.69,207.64 1888.49,208.14 1887.99,209.65 1884.81,209.65 1884.31,208.14 1883.11,207.64 1881.69,208.35 1879.45,206.11 1880.16,204.69 1879.66,203.49 1878.15,202.99 1878.15,199.81 1879.66,199.31 1880.16,198.11 1879.45,196.69 1881.69,194.45 1883.11,195.16" fill="#808080" stroke="#808080" stroke-width="0.8" stroke-linejoin="round"/><circle cx="1886.4" cy="201.4" r="5.376" fill="#fff"/><circle cx="1886.4" cy="201.4" r="3.948" fill="#fff6ee" stroke="#ed6b21" stroke-width="1"/><rect x="1430" y="140.5" width="28.7" height="17.8" fill="#f98000"/><rect x="1436.8" y="194" width="15.3" height="14.3" fill="none" stroke="#808080" stroke-width="1.3"/><line x1="1436.8" y1="208" x2="1452.1" y2="208" stroke="#808080" stroke-width="2"/><line x1="1441" y1="199.2" x2="1452" y2="199.2" stroke="#808080" stroke-width="1.1"/><circle cx="1441.2" cy="199.3" r="2.1" fill="#ed6b21"/><path d="M1858.90 235.70 l4.60 4.60 l4.60 -4.60" fill="none" stroke="#444" stroke-width="1.15"/><path d="M1539.90 267.00 l4.60 4.60 l4.60 -4.60" fill="none" stroke="#444" stroke-width="1.15"/></svg>
<span class="t" style="left:1423.20px;top:229.68px;font-size:15.5px;line-height:15.5px;color:#000;letter-spacing:-0.505px;">Supports:</span>
<div class="r" style="left:1489px;top:224.2px;width:385px;height:27.2px;background:#fff;border:1px solid #7a7a7a;box-sizing:border-box;border-radius:3px;"></div>
<span class="t" style="left:1493.40px;top:230.48px;font-size:15.5px;line-height:15.5px;color:#000;letter-spacing:-0.744px;">Everywhere</span>
<span class="t" style="left:1423.20px;top:260.48px;font-size:15.5px;line-height:15.5px;color:#000;letter-spacing:-0.010px;">Infill:</span>
<div class="r" style="left:1459.3px;top:255.4px;width:95.4px;height:27.2px;background:#fff;border:1px solid #7a7a7a;box-sizing:border-box;border-radius:3px;"></div>
<span class="t" style="left:1466.10px;top:260.88px;font-size:15.5px;line-height:15.5px;color:#000;letter-spacing:-0.974px;">20%</span>
<span class="t" style="left:1577.60px;top:260.48px;font-size:15.5px;line-height:15.5px;color:#000;letter-spacing:-0.493px;">Brim:</span>
<div class="r" style="left:1615.2px;top:260px;width:16.8px;height:16.8px;background:#f3f3f3;border:1px solid #6a6a6a;box-sizing:border-box;border-radius:3.5px;"></div>
<svg class="r" style="left:1421px;top:220px" width="497" height="70" viewBox="1421 220 497 70"><path d="M1858.90 235.70 l4.60 4.60 l4.60 -4.60" fill="none" stroke="#444" stroke-width="1.15"/><path d="M1539.90 267.00 l4.60 4.60 l4.60 -4.60" fill="none" stroke="#444" stroke-width="1.15"/></svg>
<div class="r" style="left:1422.2px;top:290.3px;width:476.8px;height:215.2px;background:#fff;border:1px solid #5a5a5a;box-sizing:border-box;"></div>
<div class="r" style="left:1423.2px;top:317.3px;width:474.6px;height:25.5px;background:#d9d9d9;"></div>
<div class="r" style="left:1662px;top:291.3px;width:1px;height:26px;background:#e4e4e4;"></div>
<div class="r" style="left:1698px;top:291.3px;width:1px;height:26px;background:#e4e4e4;"></div>
<span class="t" style="left:1429.30px;top:297.18px;font-size:15.5px;line-height:15.5px;color:#000;letter-spacing:-0.537px;">Name</span>
<span class="t" style="left:1775.50px;top:297.18px;font-size:15.5px;line-height:15.5px;color:#000;letter-spacing:-0.199px;">Editing</span>
<span class="t" style="left:1446.30px;top:322.78px;font-size:15.5px;line-height:15.5px;color:#000;letter-spacing:-0.475px;">Elegoo Saturn 2 Vat Holder.STL</span>
<svg class="r" style="left:1660px;top:318px" width="160" height="25" viewBox="1660 318 160 25"><path d="M1672.5 329.5 Q1680.5 320.5 1688.5 329.5 Q1680.5 338.5 1672.5 329.5 Z" fill="none" stroke="#808080" stroke-width="1.6"/><circle cx="1680.5" cy="329.5" r="2.6" fill="#808080"/><path d="M1797 326.5 h-5 a1.5 1.5 0 0 0 -1.5 1.5 v7.5 a1.5 1.5 0 0 0 1.5 1.5 h7.5 a1.5 1.5 0 0 0 1.5 -1.5 v-4.5" fill="none" stroke="#808080" stroke-width="1.5"/><circle cx="1801.3" cy="326.3" r="2.6" fill="none" stroke="#ed6b21" stroke-width="1.4"/></svg>
<div class="r" style="left:1422.2px;top:522.5px;width:476.8px;height:200px;border:1px solid #dcdcdc;box-sizing:border-box;"></div>
<div class="r" style="left:1431px;top:515px;width:150px;height:15px;background:#fff;"></div>
<span class="t" style="left:1435.20px;top:515.28px;font-size:15.5px;line-height:15.5px;color:#000;letter-spacing:-0.389px;font-weight:bold;">Object manipulation</span>
<div class="r" style="left:1432.2px;top:539.4px;width:179.3px;height:27px;background:#fff;border:1px solid #7a7a7a;box-sizing:border-box;border-radius:3px;"></div>
<span class="t" style="left:1436.50px;top:545.78px;font-size:15.5px;line-height:15.5px;color:#000;letter-spacing:-0.138px;">World coordinates</span>
<svg class="r" style="left:1590px;top:545px" width="25" height="15" viewBox="1590 545 25 15"><path d="M1596.60 551.20 l4.60 4.60 l4.60 -4.60" fill="none" stroke="#444" stroke-width="1.15"/></svg>
<span class="t" style="left:1633.93px;top:545.08px;font-size:15.5px;line-height:15.5px;color:#000;font-weight:bold;">X</span>
<span class="t" style="left:1709.13px;top:545.08px;font-size:15.5px;line-height:15.5px;color:#000;font-weight:bold;">Y</span>
<span class="t" style="left:1784.47px;top:545.08px;font-size:15.5px;line-height:15.5px;color:#000;font-weight:bold;">Z</span>
<div class="r" style="left:1615.2px;top:570.1px;width:71.5px;height:27.6px;background:#fff;border:1px solid #4f4f4f;box-sizing:border-box;"></div>
<span class="t" style="left:1621.90px;top:574.98px;font-size:15.5px;line-height:15.5px;color:#000;letter-spacing:-0.991px;">125</span>
<div class="r" style="left:1690.2px;top:570.1px;width:71.5px;height:27.6px;background:#fff;border:1px solid #4f4f4f;box-sizing:border-box;"></div>
<span class="t" style="left:1696.90px;top:574.98px;font-size:15.5px;line-height:15.5px;color:#000;letter-spacing:-0.991px;">105</span>
<div class="r" style="left:1765.1px;top:570.1px;width:71.5px;height:27.6px;background:#fff;border:1px solid #4f4f4f;box-sizing:border-box;"></div>
<span class="t" style="left:1771.80px;top:574.98px;font-size:15.5px;line-height:15.5px;color:#000;letter-spacing:-0.867px;">24.5</span>
<div class="r" style="left:1615.2px;top:601.1px;width:71.5px;height:27.6px;background:#fff;border:1px solid #4f4f4f;box-sizing:border-box;"></div>
<span class="t" style="left:1621.90px;top:605.98px;font-size:15.5px;line-height:15.5px;color:#000;letter-spacing:-0.991px;">0</span>
<div class="r" style="left:1690.2px;top:601.1px;width:71.5px;height:27.6px;background:#fff;border:1px solid #4f4f4f;box-sizing:border-box;"></div>
<span class="t" style="left:1696.90px;top:605.98px;font-size:15.5px;line-height:15.5px;color:#000;letter-spacing:-0.991px;">0</span>
<div class="r" style="left:1765.1px;top:601.1px;width:71.5px;height:27.6px;background:#fff;border:1px solid #4f4f4f;box-sizing:border-box;"></div>
<span class="t" style="left:1771.80px;top:605.98px;font-size:15.5px;line-height:15.5px;color:#000;letter-spacing:-0.991px;">0</span>
<div class="r" style="left:1615.2px;top:632.1px;width:71.5px;height:27.6px;background:#fff;border:1px solid #4f4f4f;box-sizing:border-box;"></div>
<span class="t" style="left:1621.90px;top:636.98px;font-size:15.5px;line-height:15.5px;color:#000;letter-spacing:-0.991px;">100</span>
<div class="r" style="left:1690.2px;top:632.1px;width:71.5px;height:27.6px;background:#fff;border:1px solid #4f4f4f;box-sizing:border-box;"></div>
<span class="t" style="left:1696.90px;top:636.98px;font-size:15.5px;line-height:15.5px;color:#000;letter-spacing:-0.991px;">100</span>
<div class="r" style="left:1765.1px;top:632.1px;width:71.5px;height:27.6px;background:#fff;border:1px solid #4f4f4f;box-sizing:border-box;"></div>
<span class="t" style="left:1771.80px;top:636.98px;font-size:15.5px;line-height:15.5px;color:#000;letter-spacing:-0.991px;">100</span>
<div class="r" style="left:1615.2px;top:663.1px;width:71.5px;height:27.6px;background:#fff;border:1px solid #4f4f4f;box-sizing:border-box;"></div>
<span class="t" style="left:1621.90px;top:667.98px;font-size:15.5px;line-height:15.5px;color:#000;letter-spacing:-0.909px;">186.57</span>
<div class="r" style="left:1690.2px;top:663.1px;width:71.5px;height:27.6px;background:#fff;border:1px solid #4f4f4f;box-sizing:border-box;"></div>
<span class="t" style="left:1696.90px;top:667.98px;font-size:15.5px;line-height:15.5px;color:#000;letter-spacing:-0.909px;">120.94</span>
<div class="r" style="left:1765.1px;top:663.1px;width:71.5px;height:27.6px;background:#fff;border:1px solid #4f4f4f;box-sizing:border-box;"></div>
<span class="t" style="left:1771.80px;top:667.98px;font-size:15.5px;line-height:15.5px;color:#000;letter-spacing:-0.991px;">49</span>
<span class="t" style="left:1432.20px;top:575.98px;font-size:15.5px;line-height:15.5px;color:#000;letter-spacing:-0.517px;">Position:</span>
<span class="t" style="left:1432.20px;top:606.68px;font-size:15.5px;line-height:15.5px;color:#000;letter-spacing:-0.439px;">Rotate:</span>
<span class="t" style="left:1455.30px;top:637.68px;font-size:15.5px;line-height:15.5px;color:#000;letter-spacing:-0.522px;">Scale factors:</span>
<span class="t" style="left:1455.30px;top:668.58px;font-size:15.5px;line-height:15.5px;color:#000;letter-spacing:-0.952px;">Size:</span>
<span class="t" style="left:1840.60px;top:575.98px;font-size:15.5px;line-height:15.5px;color:#000;letter-spacing:-0.612px;">mm</span>
<span class="t" style="left:1841.00px;top:603.88px;font-size:15.5px;line-height:15.5px;color:#000;">°</span>
<span class="t" style="left:1841.00px;top:637.68px;font-size:15.5px;line-height:15.5px;color:#000;letter-spacing:-3.082px;">%</span>
<span class="t" style="left:1840.60px;top:668.58px;font-size:15.5px;line-height:15.5px;color:#000;letter-spacing:-0.612px;">mm</span>
<svg class="r" style="left:1430px;top:570px" width="460" height="105" viewBox="1430 570 460 105"><path d="M1437.61 660.37 v-3.78 a4.09 4.09 0 0 1 8.19 0 v3.78" fill="none" stroke="#808080" stroke-width="2.42"/><rect x="1434.04" y="659.87" width="15.33" height="9.66" rx="1.68" fill="#808080"/><path d="M1439.81 663.44 h2.31 l1.89 1.26 l-1.89 1.26 h-2.31 z" fill="#fff"/><path d="M1878 578.5 h-3.5 a1.2 1.2 0 0 0 -1.2 1.2 v6 h8.5 v-3" fill="none" stroke="#808080" stroke-width="1.4"/><circle cx="1882.3" cy="578.5" r="2.4" fill="#808080"/><line x1="1871" y1="589.3" x2="1885.5" y2="589.3" stroke="#ed6b21" stroke-width="1.8"/></svg>
<div class="r" style="left:1432.2px;top:695.1px;width:16.6px;height:16.6px;background:#f3f3f3;border:1px solid #6a6a6a;box-sizing:border-box;border-radius:3.5px;"></div>
<span class="t" style="left:1452.40px;top:696.68px;font-size:15.5px;line-height:15.5px;color:#000;letter-spacing:-0.911px;">Inches</span>
<div class="r" style="left:1422.2px;top:740.4px;width:476.8px;height:89.3px;border:1px solid #dcdcdc;box-sizing:border-box;"></div>
<div class="r" style="left:1428px;top:733px;width:35px;height:15px;background:#fff;"></div>
<span class="t" style="left:1431.50px;top:732.98px;font-size:15.5px;line-height:15.5px;color:#000;letter-spacing:-0.051px;font-weight:bold;">Info</span>
<span class="t" style="left:1428.40px;top:755.88px;font-size:15.5px;line-height:15.5px;color:#000;letter-spacing:-0.872px;">Size:</span>
<span class="t" style="left:1487.60px;top:755.88px;font-size:15.5px;line-height:15.5px;color:#000;letter-spacing:-0.710px;">186.57 x 120.94 x 49.00</span>
<span class="t" style="left:1653.60px;top:755.88px;font-size:15.5px;line-height:15.5px;color:#000;letter-spacing:-0.515px;">Volume:</span>
<span class="t" style="left:1722.30px;top:755.88px;font-size:15.5px;line-height:15.5px;color:#000;letter-spacing:-0.763px;">220206.12</span>
<span class="t" style="left:1428.40px;top:781.78px;font-size:15.5px;line-height:15.5px;color:#000;letter-spacing:-1.189px;">Facets:</span>
<span class="t" style="left:1487.60px;top:781.78px;font-size:15.5px;line-height:15.5px;color:#000;letter-spacing:-0.503px;">71248 (1 shell)</span>
<span class="t" style="left:1430.40px;top:806.68px;font-size:15.5px;line-height:15.5px;color:#000;letter-spacing:-0.243px;">No errors detected</span>
<div class="r" style="left:1421px;top:835px;width:479px;height:115.7px;overflow:hidden"><div style="position:absolute;left:-1421px;top:-835px;width:1918px;height:999px">
<div class="r" style="left:1422.2px;top:847.6px;width:476.8px;height:130px;border:1px solid #dcdcdc;box-sizing:border-box;"></div>
<div class="r" style="left:1428px;top:840px;width:80px;height:15px;background:#fff;"></div>
<span class="t" style="left:1431.50px;top:840.18px;font-size:15.5px;line-height:15.5px;color:#000;letter-spacing:-0.570px;font-weight:bold;">Sliced Info</span>
<span class="t" style="left:1428.40px;top:862.78px;font-size:15.5px;line-height:15.5px;color:#000;letter-spacing:-0.411px;">Used Filament (g)</span>
<span class="t" style="left:1602.70px;top:862.78px;font-size:15.5px;line-height:15.5px;color:#000;letter-spacing:-0.918px;">127.06</span>
<span class="t" style="left:1428.40px;top:888.78px;font-size:15.5px;line-height:15.5px;color:#000;letter-spacing:-0.428px;">Used Filament (m)</span>
<span class="t" style="left:1602.70px;top:888.78px;font-size:15.5px;line-height:15.5px;color:#000;letter-spacing:-0.898px;">42.60</span>
<span class="t" style="left:1428.40px;top:914.98px;font-size:15.5px;line-height:15.5px;color:#000;letter-spacing:-0.389px;">Used Filament (mm</span>
<span class="t" style="left:1557.60px;top:914.53px;font-size:10px;line-height:10px;color:#000;">3</span>
<span class="t" style="left:1563.40px;top:914.98px;font-size:15.5px;line-height:15.5px;color:#000;">)</span>
<span class="t" style="left:1602.70px;top:914.98px;font-size:15.5px;line-height:15.5px;color:#000;letter-spacing:-0.819px;">102467.44</span>
<span class="t" style="left:1428.40px;top:941.08px;font-size:15.5px;line-height:15.5px;color:#000;letter-spacing:-0.818px;">Cost</span>
<span class="t" style="left:1602.70px;top:941.08px;font-size:15.5px;line-height:15.5px;color:#000;letter-spacing:-1.092px;">3.23</span>
</div></div>
<div class="r" style="left:1421.7px;top:957px;width:497px;height:37.5px;background:#e5e5e5;"></div>
<span class="t" style="left:1621.40px;top:968.98px;font-size:15.5px;line-height:15.5px;color:#000;letter-spacing:-0.569px;font-weight:bold;">Export G-code</span>
</body></html>
